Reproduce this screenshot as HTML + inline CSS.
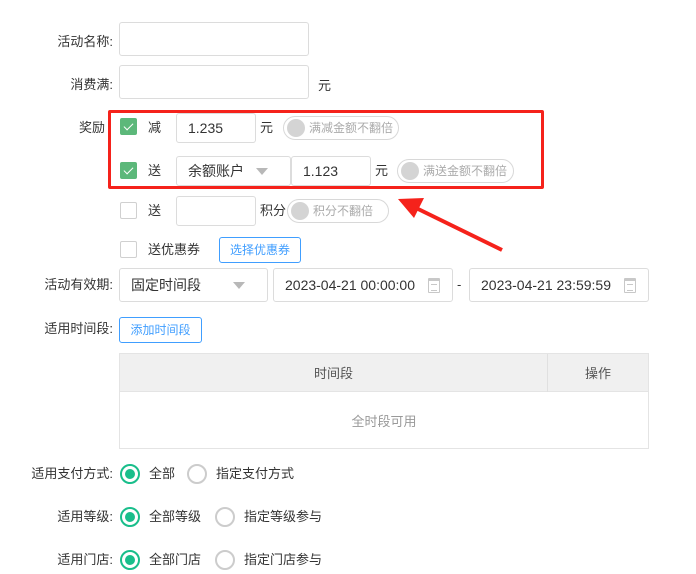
<!DOCTYPE html>
<html><head><meta charset="utf-8"><style>
*{box-sizing:border-box;margin:0;padding:0}
body{width:696px;height:574px;background:#fff;position:relative;overflow:hidden;font-family:"Liberation Sans","Noto Sans CJK SC",sans-serif;font-size:13px;color:#333}
.a{position:absolute;white-space:nowrap;line-height:16px}
.lbl{position:absolute;right:583px;white-space:nowrap;line-height:16px}
.inp{position:absolute;border:1px solid #dcdcdc;border-radius:3px;background:#fff;padding-left:11px;font-size:14px;color:#333;display:flex;align-items:center}
.cb{position:absolute;width:17px;height:17px;border:1px solid #d0d0d0;border-radius:2px;background:#fff}
.cb.on{background:#5cb87a;border-color:#5cb87a}
.cb.on:after{content:"";position:absolute;left:5px;top:2px;width:4px;height:8px;border:solid #fff;border-width:0 1.5px 1.5px 0;transform:rotate(45deg)}
.pill{position:absolute;height:24px;border:1px solid #d8d8d8;border-radius:12px;color:#aaa;font-size:12px;padding-left:25px;line-height:22px}
.pill:before{content:"";position:absolute;left:3px;top:2px;width:18px;height:18px;border-radius:50%;background:#d4d4d4}
.btn{position:absolute;border:1px solid #409eff;border-radius:3px;color:#409eff;font-size:12px;text-align:center}
.arr{position:absolute;right:22px;top:50%;margin-top:-3px;border:6px solid transparent;border-top:7px solid #b8b8b8;border-bottom:0}
.cal{position:absolute;right:12px;top:9px;width:12px;height:15px;border:1px solid #c8c8c8;border-top-width:3px;border-radius:1px}
.cal:after{content:"";position:absolute;left:2px;top:3px;width:6px;height:5px;border-top:1px solid #c8c8c8;border-bottom:1px solid #c8c8c8}
.rd{position:absolute;width:20px;height:20px;border-radius:50%;border:2px solid #ccc}
.rd.on{border-color:#19be8b}
.rd.on:after{content:"";position:absolute;left:3px;top:3px;width:10px;height:10px;border-radius:50%;background:#19be8b}
</style></head><body>
<div class="lbl" style="top:34px">活动名称:</div>
<div class="inp" style="left:119px;top:22px;width:190px;height:34px"></div>
<div class="lbl" style="top:77px">消费满:</div>
<div class="inp" style="left:119px;top:65px;width:190px;height:34px"></div>
<div class="a" style="left:318px;top:78px">元</div>
<div class="a" style="left:79px;top:120px">奖励</div>

<div style="position:absolute;left:108px;top:110px;width:436px;height:79px;border:3px solid #f5221b;border-radius:2px"></div>
<div class="cb on" style="left:120px;top:118px"></div>
<div class="a" style="left:148px;top:120px">减</div>
<div class="inp" style="left:176px;top:113px;width:80px;height:30px">1.235</div>
<div class="a" style="left:260px;top:120px">元</div>
<div class="pill" style="left:283px;top:116px;width:116px">满减金额不翻倍</div>

<div class="cb on" style="left:120px;top:162px"></div>
<div class="a" style="left:148px;top:163px">送</div>
<div class="inp" style="left:176px;top:156px;width:115px;height:30px">余额账户<span class="arr"></span></div>
<div class="inp" style="left:291px;top:156px;width:80px;height:30px">1.123</div>
<div class="a" style="left:375px;top:163px">元</div>
<div class="pill" style="left:397px;top:159px;width:117px">满送金额不翻倍</div>

<div class="cb" style="left:120px;top:202px"></div>
<div class="a" style="left:148px;top:203px">送</div>
<div class="inp" style="left:176px;top:196px;width:80px;height:30px"></div>
<div class="a" style="left:260px;top:203px">积分</div>
<div class="pill" style="left:287px;top:199px;width:102px">积分不翻倍</div>

<div class="cb" style="left:120px;top:241px"></div>
<div class="a" style="left:148px;top:242px">送优惠券</div>
<div class="btn" style="left:219px;top:237px;width:82px;height:26px;line-height:24px">选择优惠券</div>

<svg style="position:absolute;left:390px;top:190px" width="120" height="70"><line x1="112" y1="60" x2="22" y2="16" stroke="#f5221b" stroke-width="4"/><polygon points="8,9 34,8 24,28" fill="#f5221b"/></svg>

<div class="lbl" style="top:277px">活动有效期:</div>
<div class="inp" style="left:119px;top:268px;width:149px;height:34px">固定时间段<span class="arr"></span></div>
<div class="inp" style="left:273px;top:268px;width:180px;height:34px">2023-04-21 00:00:00<span class="cal"></span></div>
<div class="a" style="left:457px;top:277px">-</div>
<div class="inp" style="left:469px;top:268px;width:180px;height:34px">2023-04-21 23:59:59<span class="cal"></span></div>

<div class="lbl" style="top:321px">适用时间段:</div>
<div class="btn" style="left:119px;top:317px;width:83px;height:26px;line-height:24px">添加时间段</div>

<div style="position:absolute;left:119px;top:353px;width:530px;height:96px;border:1px solid #e4e4e4">
<div style="height:38px;background:#f0f0f0;border-bottom:1px solid #e4e4e4;position:relative">
<div class="a" style="left:0;width:427px;text-align:center;top:12px;color:#555">时间段</div>
<div style="position:absolute;left:427px;top:0;width:1px;height:38px;background:#e0e0e0"></div>
<div class="a" style="left:428px;width:100px;text-align:center;top:12px;color:#555">操作</div>
</div>
<div class="a" style="left:0;width:528px;text-align:center;top:60px;color:#999">全时段可用</div>
</div>

<div class="lbl" style="top:466px">适用支付方式:</div>
<div class="rd on" style="left:120px;top:464px"></div><div class="a" style="left:149px;top:466px">全部</div>
<div class="rd" style="left:187px;top:464px"></div><div class="a" style="left:216px;top:466px">指定支付方式</div>
<div class="lbl" style="top:509px">适用等级:</div>
<div class="rd on" style="left:120px;top:507px"></div><div class="a" style="left:149px;top:509px">全部等级</div>
<div class="rd" style="left:215px;top:507px"></div><div class="a" style="left:244px;top:509px">指定等级参与</div>
<div class="lbl" style="top:552px">适用门店:</div>
<div class="rd on" style="left:120px;top:550px"></div><div class="a" style="left:149px;top:552px">全部门店</div>
<div class="rd" style="left:215px;top:550px"></div><div class="a" style="left:244px;top:552px">指定门店参与</div>
</body></html>
